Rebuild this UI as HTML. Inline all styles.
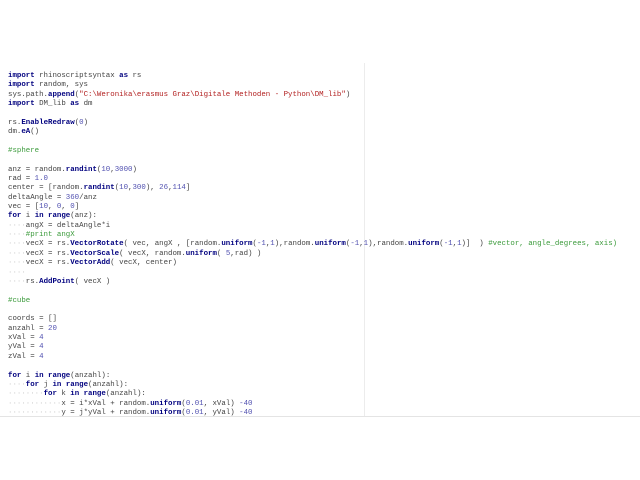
<!DOCTYPE html>
<html><head><meta charset="utf-8"><style>
html,body{margin:0;padding:0;background:#fff;width:640px;height:480px;overflow:hidden;position:relative}
pre{position:absolute;left:8px;top:72px;margin:0;font-family:"Liberation Mono",monospace;font-size:7.42px;line-height:9.36px;color:#444;white-space:pre}
.k{color:#00007f;font-weight:bold}
.f{color:#00007f;font-weight:bold}
.n{color:#5050b0}
.s{color:#b22020}
.c{color:#3a9a3a}
.d{color:#c8c8c8}
.vl{position:absolute;left:364px;top:63px;width:1px;height:353px;background:#ececec}
.hl{position:absolute;left:0;top:416px;width:640px;height:1px;background:#e4e4e4}
</style></head><body>
<div class="vl"></div><div class="hl"></div>
<pre><span class="k">import</span> rhinoscriptsyntax <span class="k">as</span> rs
<span class="k">import</span> random, sys
sys.path.<span class="f">append</span>(<span class="s">"C:\Weronika\erasmus Graz\Digitale Methoden - Python\DM_lib"</span>)
<span class="k">import</span> DM_lib <span class="k">as</span> dm

rs.<span class="f">EnableRedraw</span>(<span class="n">0</span>)
dm.<span class="f">eA</span>()

<span class="c">#sphere</span>

anz = random.<span class="f">randint</span>(<span class="n">10</span>,<span class="n">3000</span>)
rad = <span class="n">1.0</span>
center = [random.<span class="f">randint</span>(<span class="n">10</span>,<span class="n">300</span>), <span class="n">26</span>,<span class="n">114</span>]
deltaAngle = <span class="n">360</span>/anz
vec = [<span class="n">10</span>, <span class="n">0</span>, <span class="n">0</span>]
<span class="k">for</span> i <span class="k">in</span> <span class="f">range</span>(anz):
<span class="d">····</span>angX = deltaAngle*i
<span class="d">····</span><span class="c">#print angX</span>
<span class="d">····</span>vecX = rs.<span class="f">VectorRotate</span>( vec, angX , [random.<span class="f">uniform</span>(<span class="n">-1</span>,<span class="n">1</span>),random.<span class="f">uniform</span>(<span class="n">-1</span>,<span class="n">1</span>),random.<span class="f">uniform</span>(<span class="n">-1</span>,<span class="n">1</span>)]  ) <span class="c">#vector, angle_degrees, axis)</span>
<span class="d">····</span>vecX = rs.<span class="f">VectorScale</span>( vecX, random.<span class="f">uniform</span>( <span class="n">5</span>,rad) )
<span class="d">····</span>vecX = rs.<span class="f">VectorAdd</span>( vecX, center)
<span class="d">····</span>
<span class="d">····</span>rs.<span class="f">AddPoint</span>( vecX )

<span class="c">#cube</span>

coords = []
anzahl = <span class="n">20</span>
xVal = <span class="n">4</span>
yVal = <span class="n">4</span>
zVal = <span class="n">4</span>

<span class="k">for</span> i <span class="k">in</span> <span class="f">range</span>(anzahl):
<span class="d">····</span><span class="k">for</span> j <span class="k">in</span> <span class="f">range</span>(anzahl):
<span class="d">········</span><span class="k">for</span> k <span class="k">in</span> <span class="f">range</span>(anzahl):
<span class="d">············</span>x = i*xVal + random.<span class="f">uniform</span>(<span class="n">0.01</span>, xVal) <span class="n">-40</span>
<span class="d">············</span>y = j*yVal + random.<span class="f">uniform</span>(<span class="n">0.01</span>, yVal) <span class="n">-40</span></pre>
</body></html>
